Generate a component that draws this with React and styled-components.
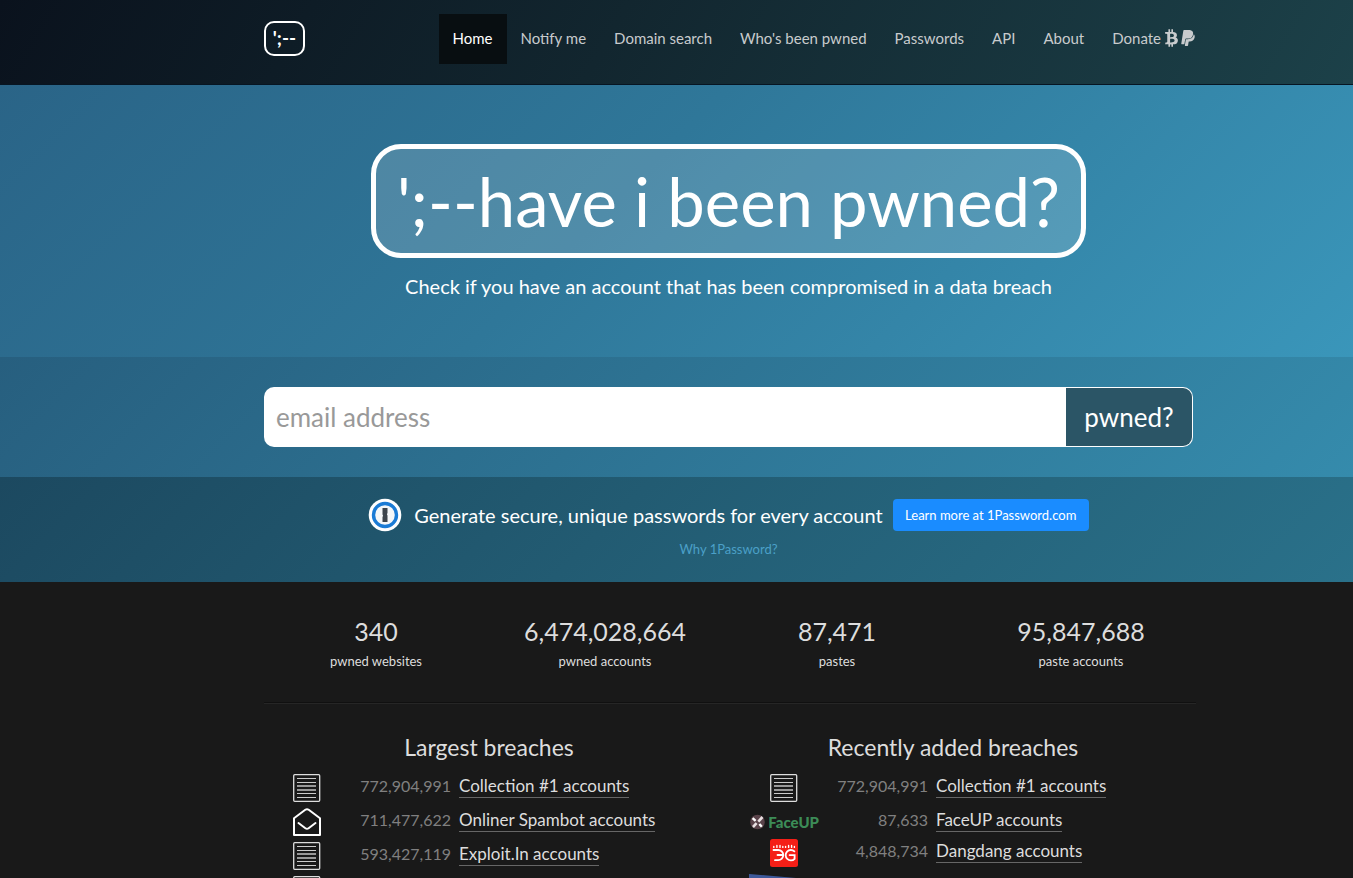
import styled, { createGlobalStyle } from "styled-components";
import { FaBtc, FaPaypal } from "react-icons/fa";

const GlobalStyle = createGlobalStyle`
  * {
    box-sizing: border-box;
  }
  html {
    background-color: #191919;
    scrollbar-width: none;
  }
  body {
    margin: 0;
    color: #ddd;
    font-family: Lato, "Open Sans", sans-serif;
    font-size: 16px;
    line-height: 24px;
  }
  a {
    text-decoration: none;
  }
`;

const Section = styled.section`
  padding-left: 107px;
`;

const Container = styled.div`
  max-width: 932px;
  margin: 0 auto;
`;

const BandContainer = styled(Container)`
  padding-right: 3px;
`;

const Header = styled.header`
  height: 85px;
  padding-left: 107px;
  border-bottom: 1px solid #071522;
  background: linear-gradient(120deg, #0a121d 0%, #12262f 45%, #1c4149 100%);
`;

const HeaderRow = styled(Container)`
  display: flex;
  justify-content: space-between;
  align-items: flex-start;
  padding-top: 14px;
`;

const Brand = styled.a`
  width: 41px;
  height: 35px;
  margin-top: 7px;
  border: 2px solid #fff;
  border-radius: 10px;
  color: #fff;
  font-size: 19px;
  font-weight: bold;
  line-height: 30px;
  text-align: center;
`;

const Nav = styled.nav`
  display: flex;
`;

const NavLink = styled.a`
  display: flex;
  align-items: center;
  gap: 4px;
  height: 50px;
  padding: 0 14px 2px;
  white-space: nowrap;
  font-size: 15px;
  color: ${(props) => (props.$active ? "#fff" : "#c8cbcd")};
  background-color: ${(props) => (props.$active ? "#080e11" : "transparent")};
  &:last-child {
    padding-right: 0;
  }
`;

const DonateIcons = styled.span`
  display: flex;
  align-items: center;
  gap: 2px;
  font-size: 18px;
  svg:first-child {
    width: 13px;
  }
  svg:last-child {
    width: 16px;
  }
`;

const Hero = styled(Section)`
  padding-top: 59px;
  padding-bottom: 56px;
  text-align: center;
  background: linear-gradient(135deg, #2a6487 0%, #2f7799 45%, #3a96ba 100%);
`;

const HeroTitle = styled.h1`
  display: inline-block;
  margin: 0;
  padding: 0 21px;
  height: 114px;
  border: 5px solid #fff;
  border-radius: 30px;
  background-color: rgba(255, 255, 255, 0.16);
  color: #fff;
  font-size: 67px;
  font-weight: normal;
  line-height: 104px;
  vertical-align: top;
  white-space: nowrap;
`;

const HeroText = styled.p`
  margin: 13px 0 0;
  color: #fff;
  font-size: 20px;
  line-height: 30px;
`;

const SearchSection = styled(Section)`
  padding-top: 30px;
  padding-bottom: 30px;
  background: linear-gradient(135deg, #275f7f 0%, #2d7292 45%, #358bac 100%);
`;

const SearchForm = styled.form`
  display: flex;
  height: 60px;
`;

const SearchInput = styled.input`
  flex: 1;
  min-width: 0;
  padding: 0 12px;
  border: none;
  border-radius: 10px 0 0 10px;
  background-color: #fff;
  color: #444;
  font-family: inherit;
  font-size: 26px;
  &::placeholder {
    color: #999;
    opacity: 1;
  }
`;

const SearchButton = styled.button`
  width: 127px;
  padding: 0;
  border: 1px solid #fff;
  border-left: none;
  border-radius: 0 10px 10px 0;
  background-color: #2b5566;
  color: #fff;
  font-family: inherit;
  font-size: 26px;
`;

const Promo = styled(Section)`
  height: 105px;
  padding-top: 21px;
  text-align: center;
  background: linear-gradient(135deg, #1c4960 0%, #225b72 45%, #2a718a 100%);
`;

const PromoRow = styled.div`
  display: flex;
  align-items: center;
  justify-content: center;
  color: #fff;
  font-size: 20px;
  svg {
    margin-right: 12px;
  }
`;

const PromoButton = styled.a`
  width: 196px;
  height: 32px;
  margin-left: 10px;
  border-radius: 4px;
  background-color: #1a8cff;
  color: #fff;
  font-size: 13px;
  line-height: 32px;
`;

const PromoLink = styled.a`
  display: block;
  margin-top: 5px;
  color: #4ba0c8;
  font-size: 13px;
`;

const Stats = styled.div`
  padding: 32px 0 29px;
  border-bottom: 1px solid #101010;
  box-shadow: 0 1px 0 #262626;
`;

const StatsGrid = styled.div`
  display: grid;
  grid-template-columns: 224fr 234fr 230fr 258fr;
  margin-right: -14px;
  text-align: center;
`;

const StatCount = styled.div`
  font-size: 25px;
  line-height: 35px;
`;

const StatLabel = styled.div`
  font-size: 13px;
`;

const Breaches = styled.div`
  display: flex;
  gap: 43px;
  padding: 29px 0 0 8px;
`;

const BreachColumn = styled.section`
  flex: 0 1 ${(props) => props.$width}px;
`;

const BreachHeading = styled.h2`
  margin: 0 0 9px;
  font-size: 23px;
  font-weight: normal;
  line-height: 30px;
  text-align: center;
`;

const BreachTable = styled.table`
  width: 100%;
  border-collapse: collapse;
  td {
    padding: 0;
  }
`;

const BreachRow = styled.tr`
  height: ${(props) => (props.$compact ? 28 : 34)}px;
`;

const LogoCell = styled.td`
  width: 70px;
  text-align: center;
  svg {
    display: block;
    margin: 0 auto;
  }
`;

const CountCell = styled.td`
  width: 109px;
  color: #808080;
  text-align: right;
  && {
    padding-bottom: 4px;
  }
`;

const NameCell = styled.td`
  && {
    padding: 0 0 2px 8px;
  }
`;

const BreachLink = styled.a`
  display: inline-block;
  border-bottom: 1px solid #666;
  color: #ddd;
  font-size: 17px;
  line-height: 22px;
  vertical-align: top;
`;

const FaceUpLogo = styled.span`
  display: flex;
  align-items: center;
  gap: 2px;
  color: #3c8c57;
  font-size: 15px;
  font-weight: 900;
  line-height: 18px;
`;

function OnePasswordIcon() {
  return (
    <svg width="34" height="34" viewBox="0 0 34 34" aria-hidden="true">
      <circle cx="17" cy="17" r="16.3" fill="#fff" />
      <circle cx="17" cy="17" r="11.5" fill="#f5f7f8" stroke="#1b7bd5" strokeWidth="3.4" />
      <path d="M14.5 10h5v5l-.6 1.2.6 1.3V24h-5v-5l.6-1.2-.6-1.3z" fill="#3d444b" />
    </svg>
  );
}

function ListIcon() {
  return (
    <svg width="28" height="28" viewBox="0 0 28 28" fill="none" aria-hidden="true">
      <rect x=".7" y=".7" width="26" height="26.6" rx="1" stroke="#ddd" strokeWidth="1.3" />
      <path d="M4 4.5h19M4 8.5h19M4 19.5h19M4 23.5h19" stroke="#ccc" strokeWidth="1.1" />
      <path d="M4 12h19M4 16h19" stroke="#999" strokeWidth="1.8" />
    </svg>
  );
}

function MailIcon() {
  return (
    <svg width="28" height="28" viewBox="0 0 28 28" fill="none" stroke="#fff" strokeWidth="2" strokeLinecap="round" strokeLinejoin="round" aria-hidden="true">
      <path d="M1 10.3 12.3 1.8Q14 .6 15.7 1.8L27 10.3V27H1z" />
      <path d="M5.5 15 12.4 20.2Q14 21.3 15.6 20.2L22.5 15" />
    </svg>
  );
}

function FaceUpIcon() {
  return (
    <FaceUpLogo role="img" aria-label="FaceUP">
      <svg width="15" height="16" viewBox="0 0 15 16">
        <circle cx="7.5" cy="8" r="7.3" fill="#5a434a" />
        <path d="M12.5 3 8.3 7.6M6.6 9.2 3 13" stroke="#e8dfe1" strokeWidth="2.6" />
        <path d="M2.6 4.2 5.6 6.8M9.4 10l2.4 2.8" stroke="#fff" strokeWidth="2.4" />
      </svg>
      FaceUP
    </FaceUpLogo>
  );
}

function DangdangIcon() {
  return (
    <svg width="28" height="28" viewBox="0 0 28 28" fill="none" aria-hidden="true">
      <rect width="28" height="28" rx="2.5" fill="#f51f17" />
      <g stroke="#fff" strokeWidth="1.8" strokeLinecap="round">
        <path d="M3.5 11H8.2a5 5 0 0 1 0 10.2H5M7.5 16h5.2" />
        <path d="M24.4 12.4a5.2 5.2 0 1 0 .2 7.4v-3.7h-5" />
        <path d="M3.8 7.4v1M6.9 6.4v2M10 6.4v2M12.8 7.4v1M15.6 7.4v1M18.6 6.4v2M21.6 6.4v2M24.4 7.4v1" strokeWidth="1.4" />
      </g>
    </svg>
  );
}

function BannerIcon() {
  return (
    <svg width="70" height="20" viewBox="0 0 70 20" aria-hidden="true">
      <path d="M0 0 64 5.5 60 20H0z" fill="#3e599a" />
    </svg>
  );
}

const navItems = [
  "Home",
  "Notify me",
  "Domain search",
  "Who's been pwned",
  "Passwords",
  "API",
  "About",
];

const stats = [
  { count: "340", label: "pwned websites" },
  { count: "6,474,028,664", label: "pwned accounts" },
  { count: "87,471", label: "pastes" },
  { count: "95,847,688", label: "paste accounts" },
];

const largest = [
  { icon: <ListIcon />, count: "772,904,991", name: "Collection #1 accounts" },
  { icon: <MailIcon />, count: "711,477,622", name: "Onliner Spambot accounts" },
  { icon: <ListIcon />, count: "593,427,119", name: "Exploit.In accounts" },
  { icon: <ListIcon /> },
];

const recent = [
  { icon: <ListIcon />, count: "772,904,991", name: "Collection #1 accounts" },
  { icon: <FaceUpIcon />, count: "87,633", name: "FaceUP accounts" },
  { icon: <DangdangIcon />, count: "4,848,734", name: "Dangdang accounts", compact: true },
  { icon: <BannerIcon /> },
];

function BreachList({ title, width, rows }) {
  return (
    <BreachColumn $width={width}>
      <BreachHeading>{title}</BreachHeading>
      <BreachTable aria-label={title}>
        <tbody>
          {rows.map((row, index) => (
            <BreachRow key={index} $compact={row.compact}>
              <LogoCell>{row.icon}</LogoCell>
              <CountCell>{row.count}</CountCell>
              <NameCell>
                {row.name && <BreachLink href="#">{row.name}</BreachLink>}
              </NameCell>
            </BreachRow>
          ))}
        </tbody>
      </BreachTable>
    </BreachColumn>
  );
}

export default function App() {
  return (
    <>
      <GlobalStyle />
      <Header>
        <HeaderRow>
          <Brand href="#">';--</Brand>
          <Nav>
            {navItems.map((item) => (
              <NavLink key={item} href="#" $active={item === "Home"}>
                {item}
              </NavLink>
            ))}
            <NavLink href="#">
              Donate
              <DonateIcons>
                <FaBtc />
                <FaPaypal />
              </DonateIcons>
            </NavLink>
          </Nav>
        </HeaderRow>
      </Header>
      <main>
        <Hero>
          <BandContainer>
            <HeroTitle>';--have i been pwned?</HeroTitle>
            <HeroText>
              Check if you have an account that has been compromised in a data breach
            </HeroText>
          </BandContainer>
        </Hero>
        <SearchSection>
          <BandContainer>
            <SearchForm onSubmit={(ev) => ev.preventDefault()}>
              <SearchInput type="email" placeholder="email address" aria-label="email address" />
              <SearchButton type="submit">pwned?</SearchButton>
            </SearchForm>
          </BandContainer>
        </SearchSection>
        <Promo>
          <BandContainer>
            <PromoRow>
              <OnePasswordIcon />
              Generate secure, unique passwords for every account
              <PromoButton href="#">Learn more at 1Password.com</PromoButton>
            </PromoRow>
            <PromoLink href="#">Why 1Password?</PromoLink>
          </BandContainer>
        </Promo>
        <Section>
          <Container>
            <Stats>
              <StatsGrid>
                {stats.map((stat) => (
                  <div key={stat.label}>
                    <StatCount>{stat.count}</StatCount>
                    <StatLabel>{stat.label}</StatLabel>
                  </div>
                ))}
              </StatsGrid>
            </Stats>
            <Breaches>
              <BreachList title="Largest breaches" width={434} rows={largest} />
              <BreachList title="Recently added breaches" width={408} rows={recent} />
            </Breaches>
          </Container>
        </Section>
      </main>
    </>
  );
}
